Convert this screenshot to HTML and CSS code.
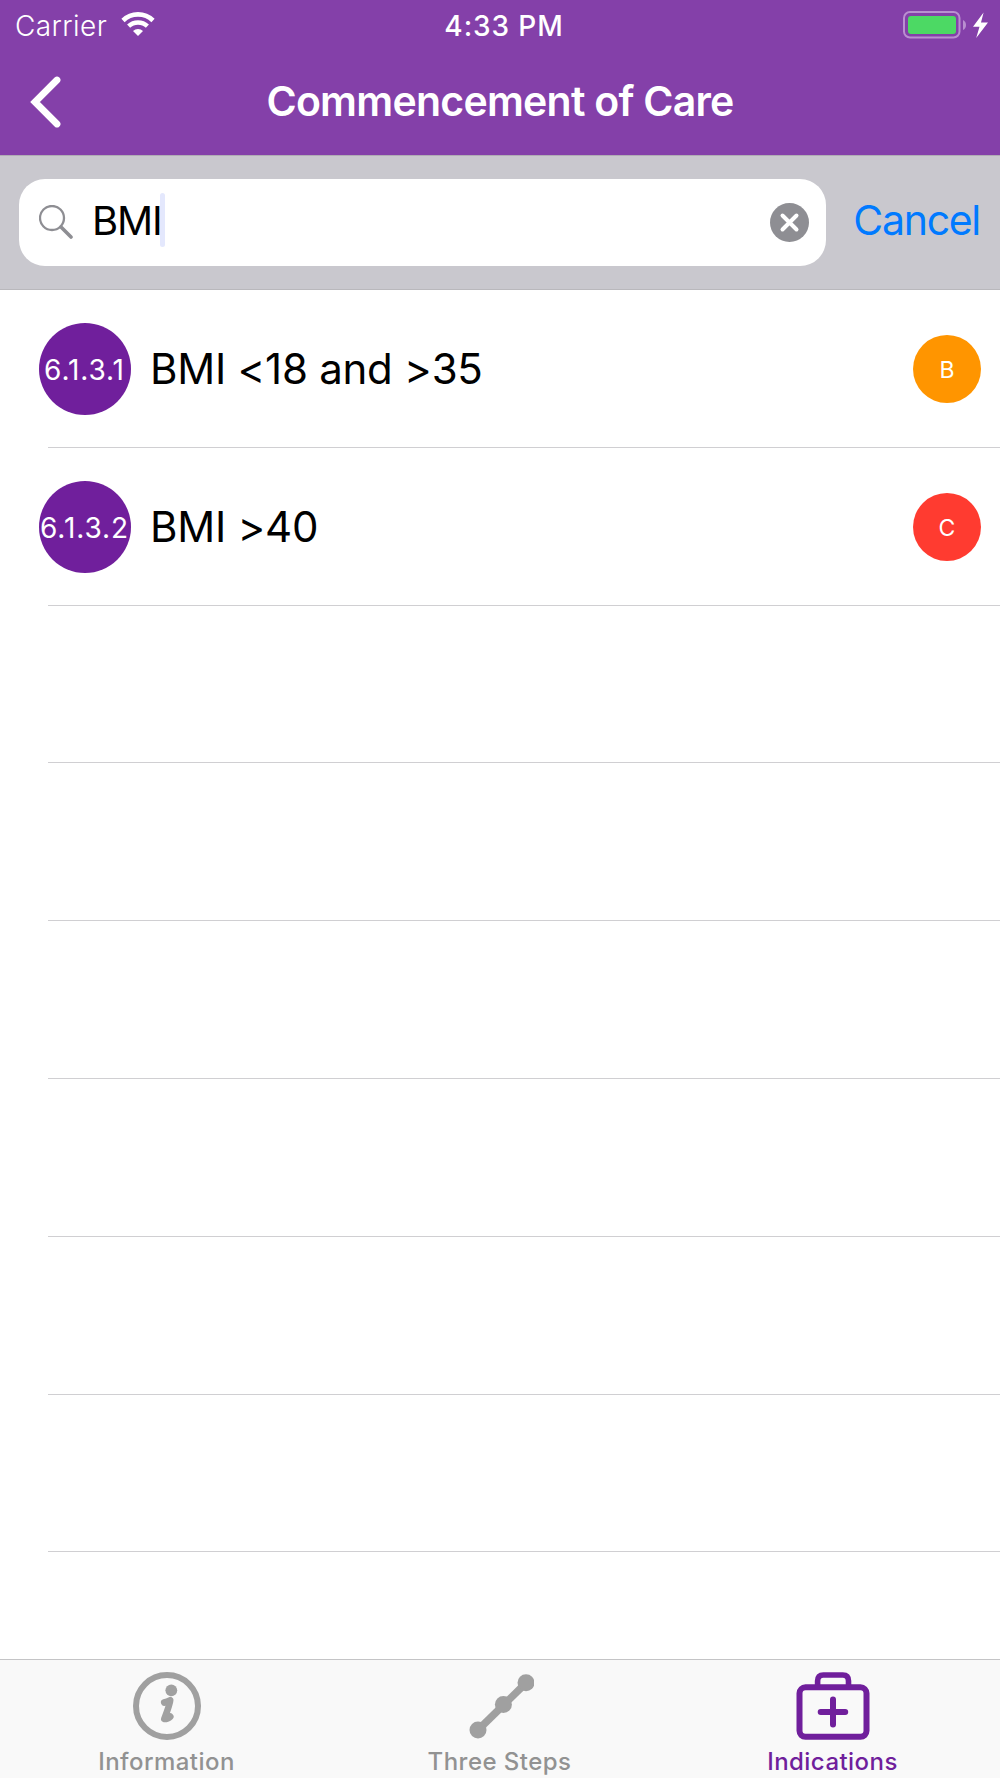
FILE: index.html
```
<!DOCTYPE html>
<html lang="en">

<head>
 <meta charset="UTF-8">
 <meta name="viewport" content="width=device-width, initial-scale=1.0">
 <link rel="stylesheet" href="styles.css">
 <title>Commencement of Care</title>
</head>

<body>
 <header class="header">
  <div class="status-bar">
   <div class="carrier">
    <span>Carrier</span>
    <svg viewBox="0 0 34 24" width="34" height="24">
     <path d="M2 8.5 A21.5 21.5 0 0 1 32 8.5" fill="none" stroke="#fff" stroke-width="4.6" />
     <path d="M7.6 14.2 A13.6 13.6 0 0 1 26.4 14.2" fill="none" stroke="#fff" stroke-width="4.4" />
     <path d="M17 24 L12 19 A7.4 7.4 0 0 1 22 19 Z" fill="#fff" />
    </svg>
   </div>
   <span class="time">4:33 PM</span>
   <svg class="battery" viewBox="0 0 86 28" width="86" height="28">
    <rect x="1" y="1" width="55.5" height="25.5" rx="6" fill="none" stroke="#b98fd0" stroke-width="2" />
    <rect x="5" y="5" width="48" height="18" rx="3" fill="#4cd964" />
    <path d="M60 9 Q63 10.5 63 14 Q63 17.5 60 19 Z" fill="#b98fd0" />
    <path d="M80.6 1.5 L70 15.8 L76.5 15.8 L73.2 27 L85 11.6 L78 11.6 Z" fill="#fff" />
   </svg>
  </div>
  <div class="nav-bar">
   <svg class="back" viewBox="0 0 32 52" width="32" height="52">
    <path d="M27 4 L5 26 L27 48" fill="none" stroke="#fff" stroke-width="6.8" stroke-linecap="round" />
   </svg>
   <h1>Commencement of Care</h1>
  </div>
 </header>

 <div class="search-bar">
  <div class="search-field">
   <svg class="search-icon" viewBox="0 0 34 34" width="34" height="34">
    <circle cx="13" cy="13" r="12" fill="none" stroke="#8e8e93" stroke-width="2.3" />
    <path d="M22 22 L32 32" stroke="#8e8e93" stroke-width="3.6" stroke-linecap="round" />
   </svg>
   <span class="query">BMI</span>
   <span class="cursor"></span>
   <svg class="clear" viewBox="0 0 39 39" width="39" height="39">
    <circle cx="19.5" cy="19.5" r="19.5" fill="#8e8e93" />
    <path d="M12.5 12.5 L26.5 26.5 M26.5 12.5 L12.5 26.5" stroke="#fff" stroke-width="4" stroke-linecap="round" />
   </svg>
  </div>
  <span class="cancel">Cancel</span>
 </div>

 <main class="list">
  <div class="row">
   <span class="number">6.1.3.1</span>
   <span class="name">BMI &lt;18 and &gt;35</span>
   <span class="code orange">B</span>
  </div>
  <div class="row">
   <span class="number">6.1.3.2</span>
   <span class="name">BMI &gt;40</span>
   <span class="code red">C</span>
  </div>
  <div class="row"></div>
  <div class="row"></div>
  <div class="row"></div>
  <div class="row"></div>
  <div class="row"></div>
  <div class="row"></div>
 </main>

 <nav class="tab-bar">
  <div class="tab">
   <svg viewBox="0 0 68 68" width="68" height="68">
    <circle cx="34" cy="34" r="31" fill="none" stroke="#a0a0a0" stroke-width="6" />
    <circle cx="38.3" cy="18.3" r="5.9" fill="#a0a0a0" />
    <path d="M31.2 30.5 Q36 29 37.2 28.2 Q37 32 31.3 47 Q35 47 37.3 44.6" fill="none" stroke="#a0a0a0" stroke-width="6.6" stroke-linecap="round" stroke-linejoin="round" />
   </svg>
   <span>Information</span>
  </div>
  <div class="tab">
   <svg viewBox="0 0 68 68" width="68" height="68">
    <path d="M12 58 L60 11" stroke="#a0a0a0" stroke-width="7.5" />
    <circle cx="12" cy="58" r="8.5" fill="#a0a0a0" />
    <circle cx="37.4" cy="32.5" r="8.5" fill="#a0a0a0" />
    <circle cx="60" cy="10.8" r="8.5" fill="#a0a0a0" />
   </svg>
   <span>Three Steps</span>
  </div>
  <div class="tab active">
   <svg viewBox="0 0 74 68" width="74" height="68">
    <rect x="3.5" y="15.3" width="67" height="49.5" rx="6" fill="none" stroke="#701f9c" stroke-width="6" />
    <path d="M21.6 14 V9 Q21.6 3 27.3 3 H46.8 Q52.5 3 52.5 9 V14" fill="none" stroke="#701f9c" stroke-width="5.6" />
    <path d="M37 27.5 V52.5 M24.7 40 H49.2" stroke="#701f9c" stroke-width="6" stroke-linecap="round" />
   </svg>
   <span>Indications</span>
  </div>
 </nav>
</body>

</html>
```
FILE: styles.css
```
* {
 box-sizing: border-box;
}

body {
 margin: 0;
 height: 1778px;
 overflow: hidden;
 display: flex;
 flex-direction: column;
 background-color: #fff;
 color: #000;
 font-family: Inter, "Liberation Sans", sans-serif;
}

svg {
 display: block;
 flex: none;
}

/* Purple header */
.header {
 height: 155px;
 background-color: #8440a9;
 color: #fff;
}

.status-bar {
 display: grid;
 grid-template-columns: 1fr auto 1fr;
 height: 50px;
 padding: 0 11px 0 15px;
 align-items: center;
 font-size: 28px;
}

.carrier {
 display: flex;
 align-items: center;
 gap: 14px;
 font-weight: 300;
 letter-spacing: 0.4px;
}

.carrier span,
.time {
 padding-top: 2px;
}

.carrier svg {
 margin-bottom: 2px;
}

.time {
 margin-left: 4px;
 font-weight: 500;
 letter-spacing: 0.9px;
}

.battery {
 justify-self: end;
}

.nav-bar {
 display: grid;
 grid-template-columns: 100px 1fr 100px;
 align-items: center;
 height: 103px;
}

.back {
 margin-left: 30px;
}

h1 {
 margin: 0 0 2px;
 font-size: 41px;
 font-weight: 600;
 letter-spacing: -0.75px;
 text-align: center;
 white-space: nowrap;
}

/* Search */
.search-bar {
 display: flex;
 align-items: center;
 height: 135px;
 padding: 0 20px 0 19px;
 border-top: 1px solid #b0acb4;
 border-bottom: 1px solid #b9b8bc;
 background-color: #c9c8ce;
}

.search-field {
 display: flex;
 align-items: center;
 width: 807px;
 height: 87px;
 padding: 0 17px 0 20px;
 border-radius: 26px;
 background-color: #fff;
}

.search-icon {
 margin-bottom: 2px;
}

.query {
 margin: 0 0 4px 19px;
 font-size: 40px;
 letter-spacing: -1.1px;
}

.cursor {
 width: 5px;
 height: 54px;
 margin: 0 0 6px -2px;
 border-radius: 3px;
 background-color: #e4e8fd;
}

.clear {
 margin-left: auto;
}

.cancel {
 margin: 0 0 5px auto;
 color: #007aff;
 font-size: 41px;
 letter-spacing: -1.3px;
}

/* Results */
.list {
 flex: 1;
}

.row {
 display: flex;
 align-items: center;
 height: 157.8px;
 margin-left: 48px;
 padding: 1px 19px 0 0;
 border-bottom: 1px solid #d0cfd2;
}

.number,
.code {
 display: flex;
 justify-content: center;
 align-items: center;
 flex: none;
 border-radius: 50%;
 color: #fff;
 white-space: nowrap;
}

.number {
 width: 92px;
 height: 92px;
 margin-left: -9.5px;
 padding-top: 2px;
 background-color: #701f9c;
 font-size: 28px;
 letter-spacing: 0.9px;
}

.name {
 margin-left: 19.5px;
 font-size: 42px;
 letter-spacing: -0.25px;
}

.code {
 width: 68px;
 height: 68px;
 margin-left: auto;
 padding-top: 2px;
 font-size: 23px;
}

.orange {
 background-color: #ff9500;
}

.red {
 background-color: #ff3b30;
}

/* Bottom tabs */
.tab-bar {
 display: grid;
 grid-template-columns: repeat(3, 1fr);
 height: 119px;
 padding-right: 1px;
 border-top: 1px solid #c4c4c6;
 background-color: #f9f9f9;
}

.tab {
 display: flex;
 flex-direction: column;
 align-items: center;
 padding-top: 12px;
 color: #929292;
 font-size: 24px;
 font-weight: 500;
 letter-spacing: 0.45px;
}

.tab span {
 margin-top: 7px;
}

.active {
 color: #701f9c;
}
```
